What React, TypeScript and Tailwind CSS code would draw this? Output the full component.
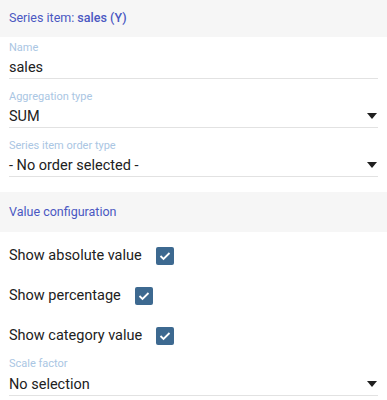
import React from "react";

const Arrow = () => (
  <svg width="10" height="6" viewBox="0 0 10 6" className="mb-[3px] mr-[1px]">
    <path d="M0 0 L10 0 L5 6 Z" fill="#1f1f1f" />
  </svg>
);

const Check = () => (
  <span className="flex h-[18px] w-[18px] items-center justify-center rounded-[2px] bg-[#3d6990]">
    <svg width="12" height="10" viewBox="0 0 12 10">
      <path d="M1.5 5 L4.5 8 L10.5 2" fill="none" stroke="#ffffff" strokeWidth="1.8" />
    </svg>
  </span>
);

type FieldProps = { label: string; value: string; select?: boolean; first?: boolean };

const Field = ({ label, value, select, first }: FieldProps) => (
  <div className={`${first ? "pt-[4px]" : "pt-[11px]"} border-b border-[#e2e2e2]`}>
    <div className="text-[11px] leading-[13px] text-[#aac6e3]">{label}</div>
    <div className="mt-[4px] flex h-[20px] items-center justify-between">
      <span className="text-[14.5px] leading-[20px] text-[#212121]">{value}</span>
      {select && <Arrow />}
    </div>
  </div>
);

const CheckRow = ({ label }: { label: string }) => (
  <div className="flex h-[40px] items-center gap-[14px] px-[9px]">
    <span className="text-[14.5px] text-[#212121]">{label}</span>
    <Check />
  </div>
);

export default function App() {
  return (
    <div className="w-[387px] h-[400px] overflow-hidden bg-white" style={{ fontFamily: "Roboto, sans-serif" }}>
      <div className="flex h-[37px] items-center bg-[#f6f6f6] px-[9px] text-[12.5px] text-[#4a58c2]">
        Series item:&nbsp;<span className="font-medium">sales (Y)</span>
      </div>
      <div className="pl-[9px] pr-[9px]">
        <Field first label="Name" value="sales" />
        <Field label="Aggregation type" value="SUM" select />
        <Field label="Series item order type" value="- No order selected -" select />
      </div>
      <div className="mt-[15px] flex h-[40px] items-center bg-[#f6f6f6] px-[9px] text-[12.5px] text-[#4a58c2]">
        Value configuration
      </div>
      <div className="mt-[4px]">
        <CheckRow label="Show absolute value" />
        <CheckRow label="Show percentage" />
        <CheckRow label="Show category value" />
      </div>
      <div className="px-[9px]">
        <div className="pt-[1px] border-b border-[#e2e2e2]">
          <div className="text-[11px] leading-[13px] text-[#aac6e3]">Scale factor</div>
          <div className="mt-[5px] flex h-[20px] items-center justify-between">
            <span className="text-[14.5px] leading-[20px] text-[#212121]">No selection</span>
            <Arrow />
          </div>
        </div>
      </div>
    </div>
  );
}
